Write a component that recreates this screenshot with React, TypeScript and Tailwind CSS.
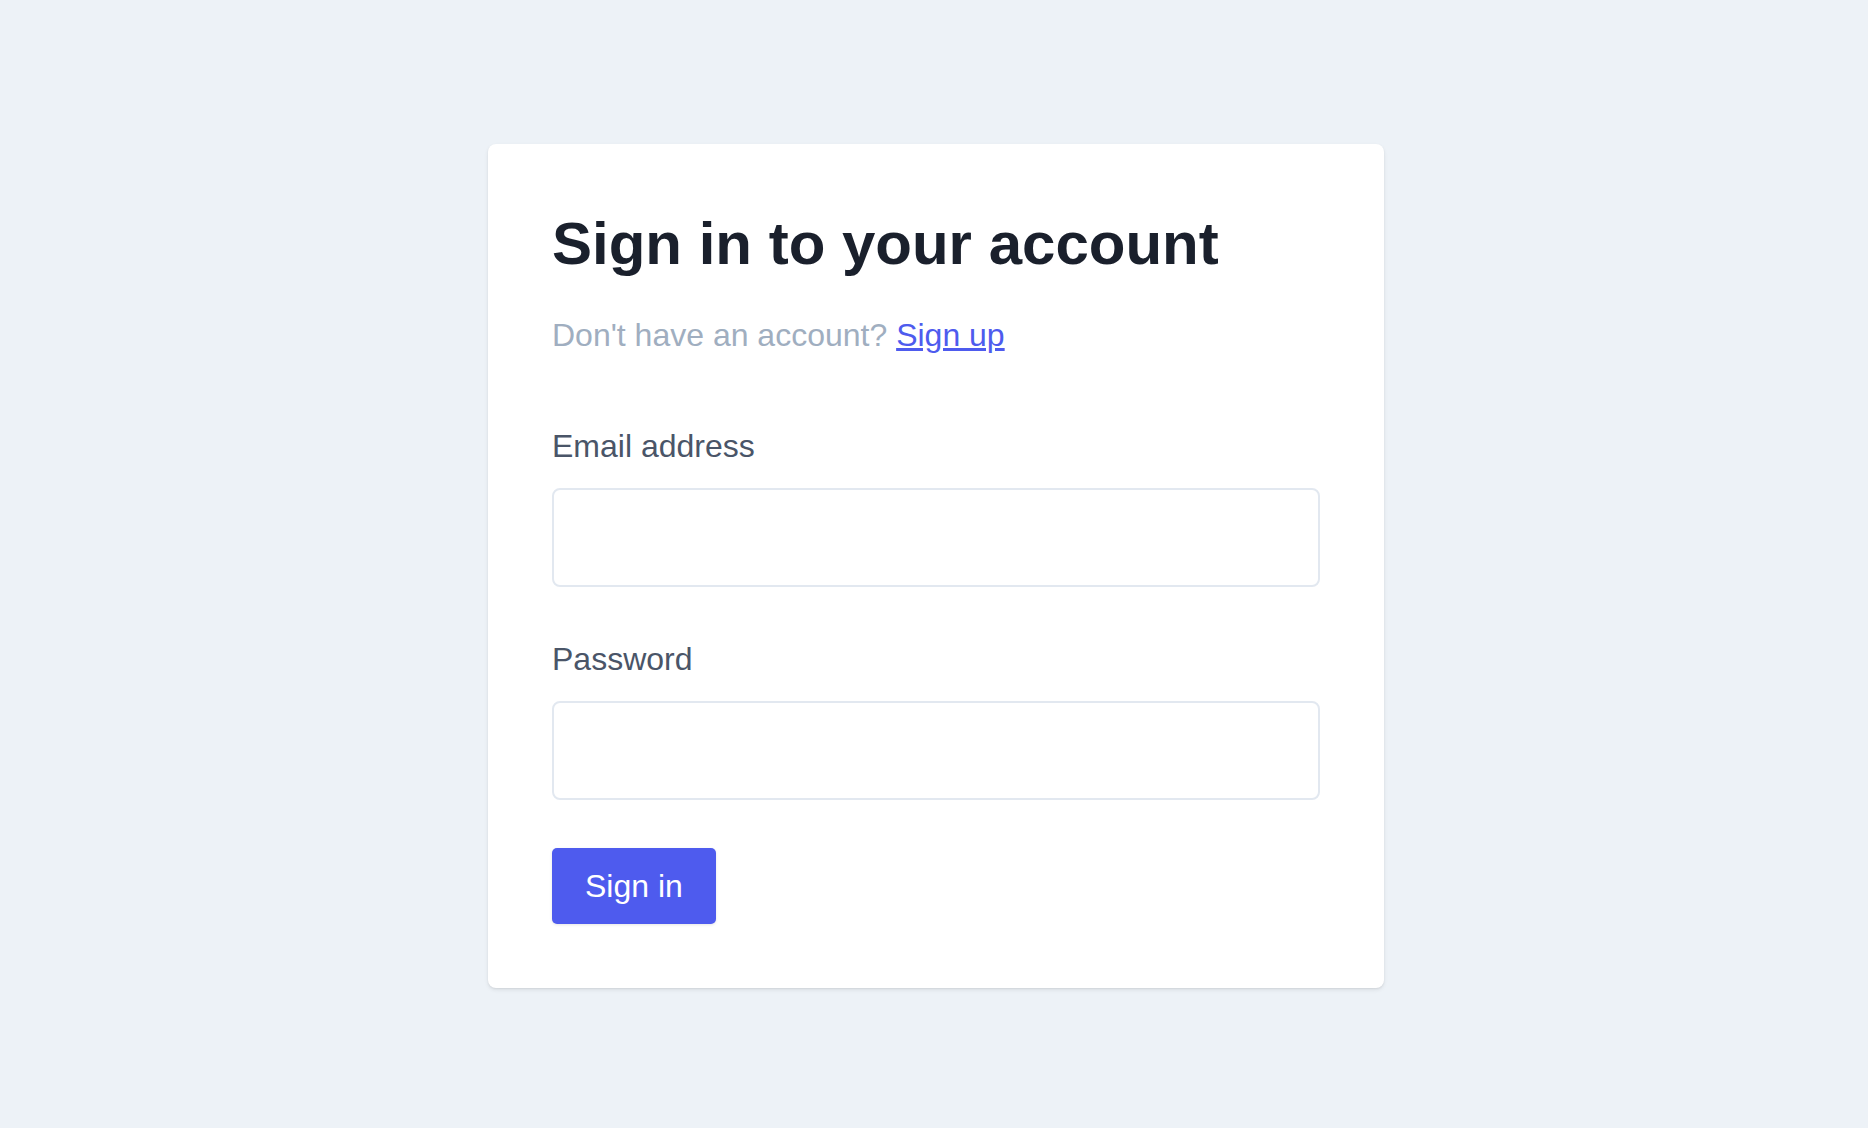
import { useState } from "react";

const FONT = "font-['Liberation_Sans',Arial,sans-serif]";

function Field({
  label,
  type,
  value,
  onChange,
  className = "",
}: {
  label: string;
  type: string;
  value: string;
  onChange: (v: string) => void;
  className?: string;
}) {
  return (
    <label className={`block ${className}`}>
      <span className="block text-[32px] leading-[48px] text-[#4a5568]">{label}</span>
      <input
        type={type}
        value={value}
        onChange={(e) => onChange(e.target.value)}
        className="mt-[18px] block h-[99px] w-full rounded-lg border-2 border-[#e2e8f0] bg-white px-6 text-[32px] text-[#1a202c] outline-none"
      />
    </label>
  );
}

export default function App() {
  const [email, setEmail] = useState("");
  const [password, setPassword] = useState("");

  return (
    <div className={`min-h-screen bg-[#edf2f7] pl-1 pt-[144px] ${FONT}`}>
      <div className="mx-auto w-[896px] rounded-lg bg-white p-16 shadow-[0_2px_4px_rgba(0,0,0,0.08),0_1px_2px_rgba(0,0,0,0.06)]">
        <h1 className="text-[60px] font-bold leading-[72px] text-[#1a202c]">
          Sign in to your account
        </h1>
        <p className="mt-[31px] text-[32px] leading-[48px] text-[#a0aec0]">
          Don't have an account?{" "}
          <a href="#" className="text-[#4e5bee] underline">
            Sign up
          </a>
        </p>

        <form onSubmit={(e) => e.preventDefault()}>
          <Field label="Email address" type="email" value={email} onChange={setEmail} className="mt-[63px]" />
          <Field label="Password" type="password" value={password} onChange={setPassword} className="mt-12" />
          <button
            type="submit"
            className="mt-12 h-[76px] rounded-[5px] bg-[#4e5bee] px-[33px] text-[32px] leading-[48px] text-white shadow-[0_1px_3px_rgba(0,0,0,0.1)]"
          >
            Sign in
          </button>
        </form>
      </div>
    </div>
  );
}
